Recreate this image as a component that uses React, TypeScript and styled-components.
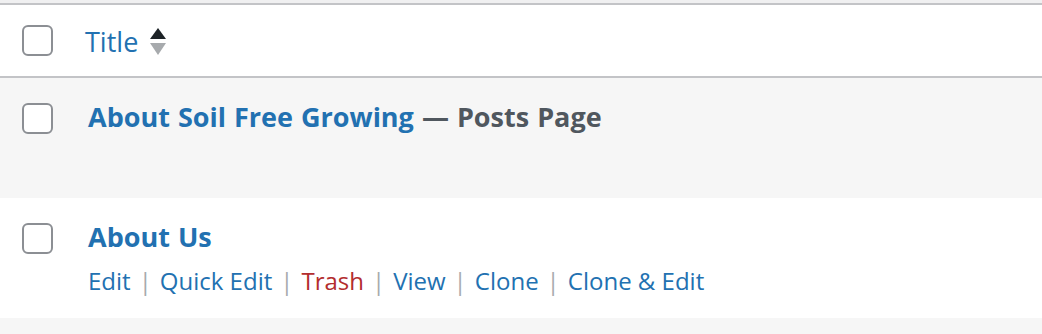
import React from "react";
import styled, { createGlobalStyle } from "styled-components";

const Global = createGlobalStyle`
  html, body { margin: 0; padding: 0; }
  body {
    background: #f0f0f1;
    font-family: "Open Sans", "Noto Sans", "Liberation Sans", sans-serif;
    width: 1042px;
    height: 334px;
    overflow: hidden;
  }
`;

const Wrap = styled.div`
  padding-top: 3px;
  background: #f0f0f1;
`;

const Table = styled.div`
  border-top: 2px solid #c3c4c7;
  background: #fff;
`;

const HeaderRow = styled.div`
  display: flex;
  align-items: center;
  height: 71px;
  border-bottom: 2px solid #c3c4c7;
  background: #fff;
`;

const Row = styled.div<{ $alt?: boolean; $h?: number }>`
  display: flex;
  align-items: flex-start;
  height: ${(p) => p.$h ?? 120}px;
  box-sizing: border-box;
  padding-top: ${(p) => (p.$h ? 0 : 25)}px;
  background: ${(p) => (p.$alt ? "#f6f6f6" : "#fff")};
`;

const CheckCell = styled.div<{ $pad?: number }>`
  width: ${(p) => p.$pad ?? 88}px;
  flex: none;
  padding-left: 22px;
  box-sizing: border-box;
  display: flex;
`;

const Check = styled.span`
  width: 31px;
  height: 31px;
  box-sizing: border-box;
  border: 2px solid #8c8f94;
  border-radius: 6px;
  background: #fff;
  display: block;
`;

const TitleCell = styled.div`
  display: flex;
  flex-direction: column;
`;

const SortLink = styled.a`
  display: flex;
  align-items: center;
  gap: 12px;
  color: #2271b1;
  font-size: 27px;
  line-height: 36px;
  text-decoration: none;
  margin-top: 2px;
`;

const RowTitle = styled.div`
  font-size: 27px;
  font-weight: 700;
  line-height: 36px;
  color: #50575e;
  margin-top: -4px;
  word-spacing: 1px;
`;

const TitleLink = styled.a`
  color: #2271b1;
  text-decoration: none;
`;

const Actions = styled.div<{ $hidden?: boolean }>`
  margin-top: 10px;
  font-size: 24px;
  line-height: 32px;
  color: #a7aaad;
  visibility: ${(p) => (p.$hidden ? "hidden" : "visible")};
`;

const Action = styled.a<{ $danger?: boolean }>`
  color: ${(p) => (p.$danger ? "#b32d2e" : "#2271b1")};
  text-decoration: none;
`;

const Sep = styled.span`
  color: #a7aaad;
  margin: 0 8px;
`;

const SortIcon = () => (
  <svg width="16" height="28" viewBox="0 0 16 28">
    <polygon points="8,0 16,11 0,11" fill="#1d2327" />
    <polygon points="0,15 16,15 8,27" fill="#a7aaad" />
  </svg>
);

const actions: { label: string; danger?: boolean }[] = [
  { label: "Edit" },
  { label: "Quick Edit" },
  { label: "Trash", danger: true },
  { label: "View" },
  { label: "Clone" },
  { label: "Clone & Edit" },
];

const ActionList = ({ hidden }: { hidden?: boolean }) => (
  <Actions $hidden={hidden}>
    {actions.map((a, i) => (
      <React.Fragment key={a.label}>
        {i > 0 && <Sep>|</Sep>}
        <Action $danger={a.danger}>{a.label}</Action>
      </React.Fragment>
    ))}
  </Actions>
);

export default function App() {
  return (
    <>
      <Global />
      <Wrap>
        <Table>
          <HeaderRow>
            <CheckCell $pad={85}>
              <Check />
            </CheckCell>
            <SortLink>
              Title
              <SortIcon />
            </SortLink>
          </HeaderRow>
          <Row $alt>
            <CheckCell>
              <Check />
            </CheckCell>
            <TitleCell>
              <RowTitle>
                <TitleLink>About Soil Free Growing</TitleLink> — Posts Page
              </RowTitle>
              <ActionList hidden />
            </TitleCell>
          </Row>
          <Row>
            <CheckCell>
              <Check />
            </CheckCell>
            <TitleCell>
              <RowTitle>
                <TitleLink>About Us</TitleLink>
              </RowTitle>
              <ActionList />
            </TitleCell>
          </Row>
          <Row $alt $h={16} />
        </Table>
      </Wrap>
    </>
  );
}
